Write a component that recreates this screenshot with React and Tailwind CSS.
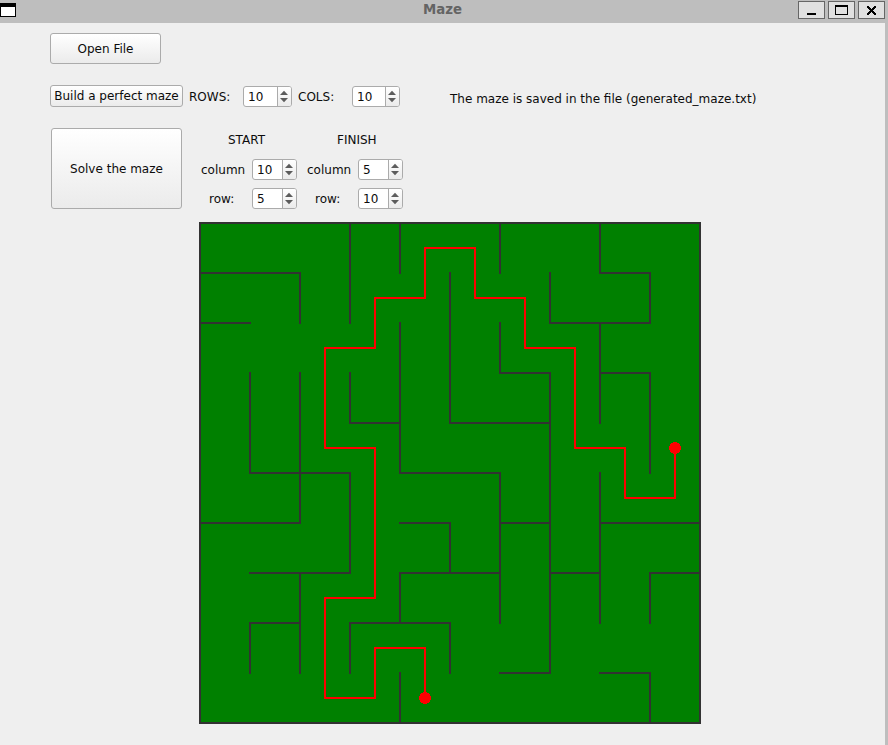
const CELL = 50;

// Each wall is [x1, y1, x2, y2] in cells.
const WALLS = [
  [1, 3, 1, 5], [1, 8, 1, 9],
  [2, 1, 2, 2], [2, 3, 2, 6], [2, 7, 2, 9],
  [3, 0, 3, 2], [3, 3, 3, 4], [3, 5, 3, 7], [3, 8, 3, 9],
  [4, 0, 4, 1], [4, 2, 4, 5], [4, 7, 4, 8], [4, 9, 4, 10],
  [5, 1, 5, 4], [5, 6, 5, 7], [5, 8, 5, 9],
  [6, 0, 6, 1], [6, 2, 6, 3], [6, 5, 6, 8],
  [7, 1, 7, 2], [7, 3, 7, 9],
  [8, 0, 8, 1], [8, 2, 8, 4], [8, 5, 8, 8],
  [9, 1, 9, 2], [9, 3, 9, 5], [9, 7, 9, 8], [9, 9, 9, 10],
  [0, 1, 2, 1], [8, 1, 9, 1],
  [0, 2, 1, 2], [7, 2, 9, 2],
  [6, 3, 7, 3], [8, 3, 9, 3],
  [3, 4, 4, 4], [5, 4, 7, 4],
  [1, 5, 3, 5], [4, 5, 6, 5],
  [0, 6, 2, 6], [4, 6, 5, 6], [6, 6, 7, 6], [8, 6, 10, 6],
  [1, 7, 3, 7], [4, 7, 6, 7], [7, 7, 8, 7], [9, 7, 10, 7],
  [1, 8, 2, 8], [3, 8, 5, 8],
  [6, 9, 7, 9], [8, 9, 9, 9],
];

// Cells (column, row) at which the solution turns.
const ROUTE = [
  [9, 4], [9, 5], [8, 5], [8, 4], [7, 4], [7, 2], [6, 2], [6, 1], [5, 1],
  [5, 0], [4, 0], [4, 1], [3, 1], [3, 2], [2, 2], [2, 4], [3, 4], [3, 7],
  [2, 7], [2, 9], [3, 9], [3, 8], [4, 8], [4, 9],
];

const center = (n) => n * CELL + CELL / 2;

function Maze() {
  const ends = [ROUTE[0], ROUTE[ROUTE.length - 1]];
  return (
    <svg width="502" height="502" viewBox="-1 -1 502 502" className="block" shapeRendering="crispEdges">
      <rect width="500" height="500" fill="#008000" stroke="#323232" strokeWidth="2" />
      <g stroke="#323232" strokeWidth="2" strokeLinecap="square">
        {WALLS.map(([x1, y1, x2, y2], i) => (
          <line key={i} x1={x1 * CELL} y1={y1 * CELL} x2={x2 * CELL} y2={y2 * CELL} />
        ))}
      </g>
      <polyline
        points={ROUTE.map(([c, r]) => `${center(c)},${center(r)}`).join(" ")}
        fill="none"
        stroke="#ff0000"
        strokeWidth="2"
      />
      {ends.map(([c, r], i) => (
        <circle key={i} cx={center(c)} cy={center(r)} r="6" fill="#ff0000" />
      ))}
    </svg>
  );
}

function PushButton({ className, children }) {
  return (
    <button
      className={`flex shrink-0 items-center justify-center whitespace-nowrap rounded-[3px] border border-[#ababab] bg-linear-to-b from-white to-[#ebebeb] ${className}`}
    >
      {children}
    </button>
  );
}

function SpinBox({ value, className }) {
  return (
    <div className={`flex h-[21px] shrink-0 overflow-hidden rounded-[3px] border border-[#ababab] bg-white ${className}`}>
      <div className="flex-1 pl-1 leading-[20px]">{value}</div>
      <div className="flex w-[14px] items-center justify-center border-l border-[#ababab] bg-linear-to-b from-white to-[#ebebeb]">
        <svg width="9" height="13" viewBox="0 0 9 13" fill="#5c5c5c" className="shrink-0">
          <path d="M4 0.8 L8 5 H0 Z" />
          <path d="M4 12.2 L8 8 H0 Z" />
        </svg>
      </div>
    </div>
  );
}

function WindowButton({ children }) {
  return (
    <button className="flex h-[18px] w-[27px] items-center justify-center border border-[#666] bg-[#e0e0e0]">
      <svg width="25" height="16" viewBox="0 0 25 16" shapeRendering="crispEdges">
        {children}
      </svg>
    </button>
  );
}

function TitleBar() {
  return (
    <header className="flex h-[23px] items-start bg-[#bebebe] pr-[3px]">
      <svg width="16" height="14" viewBox="0 0 16 14" className="mt-[3px]" shapeRendering="crispEdges">
        <rect width="16" height="14" fill="#000" />
        <rect x="1" y="4" width="14" height="9" fill="#fff" />
      </svg>
      <h1 className="flex-1 pl-[71px] text-center text-[13.3px] font-bold leading-[19px] text-[#646464]">Maze</h1>
      <div className="flex gap-[3px] pt-px">
        <WindowButton>
          <rect x="8" y="11" width="9" height="2" />
        </WindowButton>
        <WindowButton>
          <path fillRule="evenodd" d="M6 3H19V13H6Z M7 5V12H18V5Z" />
        </WindowButton>
        <WindowButton>
          <path d="M8 4h2v1h1v1h1v1h1v-1h1v-1h1v-1h2v2h-1v1h-1v1h-1v1h1v1h1v1h1v2h-2v-1h-1v-1h-1v-1h-1v1h-1v1h-1v1h-2v-2h1v-1h1v-1h1v-1h-1v-1h-1v-1h-1z" />
        </WindowButton>
      </div>
    </header>
  );
}

function Endpoint({ title, titlePad, rowPad, column, row, className }) {
  return (
    <section className={className}>
      <h2 className={`h-[31px] pt-1 leading-4 ${titlePad}`}>{title}</h2>
      <div className="flex items-center">
        <span className="w-[51px]">column</span>
        <SpinBox value={column} className="w-[45px]" />
      </div>
      <div className="mt-2 flex items-center">
        <span className={`w-[51px] ${rowPad}`}>row:</span>
        <SpinBox value={row} className="w-[45px]" />
      </div>
    </section>
  );
}

export default function App() {
  return (
    <div className="h-[745px] w-[888px] overflow-hidden bg-[#bebebe] font-['DejaVu_Sans',sans-serif] text-[12px] leading-4 text-[#0c0c0c]">
      <TitleBar />
      <main className="mr-[3px] h-[722px] bg-[#efefef] pt-2.5">
        <div className="pl-[50px]">
          <PushButton className="h-[31px] w-[111px]">Open File</PushButton>
        </div>

        <div className="mt-[21px] flex h-[22px] items-start pl-[50px]">
          <PushButton className="h-[22px] w-[133px]">Build a perfect maze</PushButton>
          <span className="ml-1.5 w-[54px] pt-1">ROWS:</span>
          <SpinBox value="10" className="mt-px w-[49px]" />
          <span className="ml-1.5 w-[54px] pt-1">COLS:</span>
          <SpinBox value="10" className="mt-px w-[48px]" />
          <p className="ml-[50px] whitespace-nowrap pt-1.5">The maze is saved in the file (generated_maze.txt)</p>
        </div>

        <div className="mt-[21px] flex h-[81px] pl-[51px]">
          <PushButton className="h-[81px] w-[131px]">Solve the maze</PushButton>
          <Endpoint title="START" titlePad="pl-[27px]" rowPad="pl-2" column="10" row="5" className="ml-[19px] w-24" />
          <Endpoint title="FINISH" titlePad="pl-[30px]" rowPad="pl-2" column="5" row="10" className="ml-2.5 w-24" />
        </div>

        <div className="mt-[13px] pl-[199px]">
          <Maze />
        </div>
      </main>
    </div>
  );
}
